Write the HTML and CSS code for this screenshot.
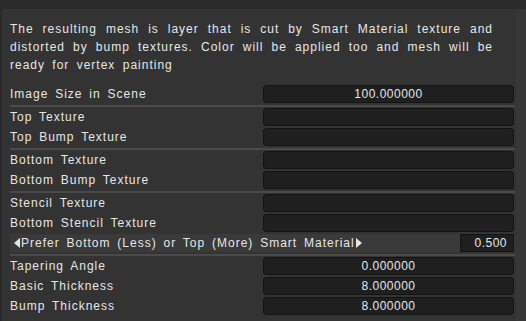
FILE: index.html
```html
<!DOCTYPE html>
<html lang="en">
	<head>
		<meta charset="UTF-8">
		<title>Smart Material Mesh</title>
		<link rel="stylesheet" href="styles.css">
	</head>
	<body>
		<div class="topbar"></div>
		<div class="window">
			<div class="content">
				<p class="desc">The resulting mesh is layer that is cut by Smart Material texture and distorted by bump textures. Color will be applied too and mesh will be ready for vertex painting</p>
				<div class="group">
					<div class="row">
						<span class="label">Image Size in Scene</span>
						<div class="field">100.000000</div>
					</div>
				</div>
				<div class="group">
					<div class="row">
						<span class="label">Top Texture</span>
						<div class="field"></div>
					</div>
					<div class="row">
						<span class="label">Top Bump Texture</span>
						<div class="field"></div>
					</div>
				</div>
				<div class="group">
					<div class="row">
						<span class="label">Bottom Texture</span>
						<div class="field"></div>
					</div>
					<div class="row">
						<span class="label">Bottom Bump Texture</span>
						<div class="field"></div>
					</div>
				</div>
				<div class="group">
					<div class="row">
						<span class="label">Stencil Texture</span>
						<div class="field"></div>
					</div>
					<div class="row">
						<span class="label">Bottom Stencil Texture</span>
						<div class="field"></div>
					</div>
					<div class="row slider">
						<span class="label"><span class="arrow left"></span>Prefer Bottom (Less) or Top (More) Smart Material<span class="arrow right"></span></span>
						<div class="field small">0.500</div>
					</div>
				</div>
				<div class="group last">
					<div class="row">
						<span class="label">Tapering Angle</span>
						<div class="field">0.000000</div>
					</div>
					<div class="row">
						<span class="label">Basic Thickness</span>
						<div class="field">8.000000</div>
					</div>
					<div class="row">
						<span class="label">Bump Thickness</span>
						<div class="field">8.000000</div>
					</div>
				</div>
			</div>
			<div class="scroll"></div>
		</div>
	</body>
</html>
```

FILE: styles.css
```css
html {
	font-family: "Liberation Sans", Arial, sans-serif;
}

body {
	margin: 0;
	width: 526px;
	height: 321px;
	overflow: hidden;
	background-color: #333333;
	color: #e6e6e6;
	font-size: 12px;
	letter-spacing: 1px;
	word-spacing: 2.5px;
}

.topbar {
	height: 9px;
	background-color: #2a2a2a;
}

.window {
	display: flex;
	height: 312px;
}

.content {
	width: 505px;
	padding-left: 8px;
	padding-right: 1px;
	border-left: 2px solid #2a2a2a;
}

.scroll {
	flex: 1;
	background-color: #373737;
}

.desc {
	margin: 11px 22px 11px 0;
	line-height: 18px;
	text-align: justify;
	word-spacing: 3px;
}

.group {
	display: flex;
	flex-direction: column;
	gap: 2px;
	padding-bottom: 2px;
	margin-bottom: 1px;
	border-bottom: 2px solid #4a4a4a;
}

.group.last {
	border-bottom: none;
}

.row {
	display: flex;
	align-items: center;
	height: 18px;
	margin-right: 1px;
}

.label {
	flex: 1;
	white-space: nowrap;
}

.field {
	box-sizing: border-box;
	width: 251px;
	height: 18px;
	line-height: 16px;
	background-color: #1f1f1f;
	border: 1px solid #141414;
	border-radius: 3px;
	text-align: center;
	word-spacing: 0;
	letter-spacing: 0.5px;
}

.slider {
	background-color: #3a3a3a;
	margin-right: 0;
	padding-right: 1px;
}

.arrow {
	display: inline-block;
	width: 0;
	height: 0;
	border-top: 5px solid transparent;
	border-bottom: 5px solid transparent;
	vertical-align: -1px;
}

.arrow.left {
	border-right: 6px solid #e6e6e6;
	margin: 0 1px 0 4px;
}

.arrow.right {
	border-left: 6px solid #e6e6e6;
	margin-left: 1px;
}

.field.small {
	width: 54px;
	border-radius: 0;
	text-align: right;
	padding-right: 6px;
}
```
